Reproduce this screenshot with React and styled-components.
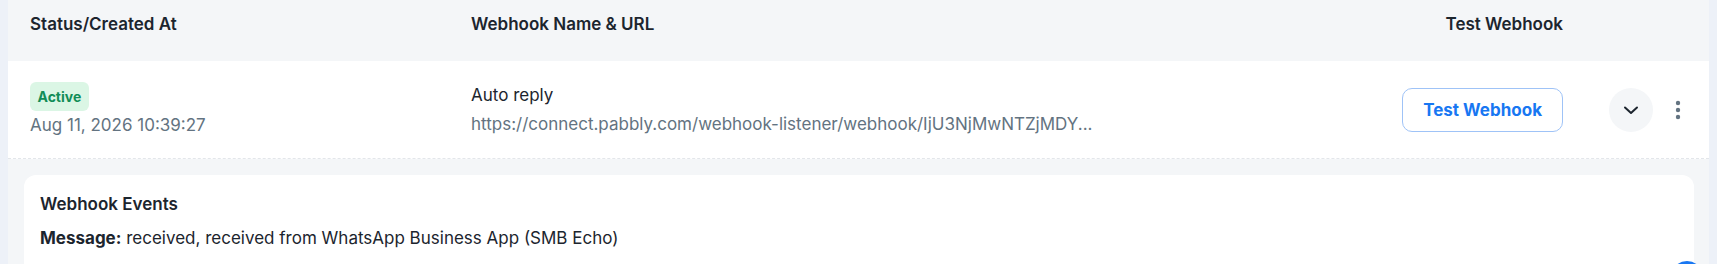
import React from 'react';
import styled, { createGlobalStyle } from 'styled-components';

const GlobalStyle = createGlobalStyle`
  html, body {
    margin: 0;
    padding: 0;
    background: #edf1f8;
    font-family: 'Inter', 'Liberation Sans', sans-serif;
    overflow: hidden;
  }
`;

const Page = styled.div`
  position: relative;
  height: 264px;
  padding: 0 8px;
  background: #edf1f8;
  overflow: hidden;
`;

const Table = styled.div`
  background: #ffffff;
  height: 100%;
`;

const Row = styled.div`
  display: grid;
  grid-template-columns: 395px 1fr 162px 74px;
  column-gap: 46px;
  align-items: ${(p) => (p.$head ? 'start' : 'center')};
  padding: ${(p) => (p.$head ? '12px 26px 0 22px' : '0 26px 0 22px')};
  height: ${(p) => (p.$head ? '61px' : '98px')};
  box-sizing: border-box;
  background: ${(p) => (p.$head ? '#f4f6f8' : '#ffffff')};
  border-bottom: ${(p) => (p.$head ? 'none' : '1px dashed #e3e6ea')};
`;

const HeadCell = styled.div`
  font-size: 17px;
  font-weight: 600;
  color: #1c252e;
  line-height: 24px;
  white-space: nowrap;
  text-align: ${(p) => (p.$right ? 'right' : 'left')};
`;

const Cell = styled.div`
  display: flex;
  flex-direction: column;
  align-items: flex-start;
  gap: ${(p) => p.$gap || '4px'};
  min-width: 0;
`;

const Badge = styled.span`
  display: inline-flex;
  align-items: center;
  height: 29px;
  padding: 0 7.5px;
  border-radius: 6px;
  background: #dbf6e5;
  color: #118d57;
  font-size: 14px;
  font-weight: 700;
`;

const SubText = styled.span`
  font-size: 17px;
  color: #637381;
  line-height: 24px;
  white-space: nowrap;
`;

const Name = styled.span`
  font-size: 17px;
  color: #1c252e;
  line-height: 24px;
`;

const OutlineButton = styled.button`
  justify-self: end;
  height: 44px;
  padding: 0 20px;
  border: 1px solid #9fc3f7;
  border-radius: 10px;
  background: #ffffff;
  color: #1877f2;
  font-family: inherit;
  font-size: 17px;
  font-weight: 700;
  white-space: nowrap;
  cursor: pointer;
`;

const Actions = styled.div`
  display: flex;
  align-items: center;
  gap: 20px;
`;

const RoundButton = styled.button`
  width: 44px;
  height: 44px;
  border-radius: 50%;
  border: none;
  background: #f4f6f8;
  display: flex;
  align-items: center;
  justify-content: center;
  padding: 0;
`;

const IconButton = styled.button`
  width: 10px;
  height: 30px;
  border: none;
  background: transparent;
  display: flex;
  align-items: center;
  justify-content: center;
  padding: 0;
`;

const Expand = styled.div`
  background: #f4f6f8;
  padding: 16px 15px 0 16px;
  height: 100%;
`;

const Card = styled.div`
  background: #ffffff;
  border-radius: 12px;
  padding: 17px 16px;
  height: 200px;
`;

const CardTitle = styled.div`
  font-size: 17px;
  font-weight: 600;
  color: #1c252e;
  line-height: 24px;
  margin-bottom: 10px;
`;

const EventLine = styled.div`
  font-size: 17px;
  color: #1c252e;
  line-height: 24px;

  b {
    font-weight: 700;
  }
`;

const Fab = styled.div`
  position: absolute;
  left: 1671px;
  top: 261px;
  width: 32px;
  height: 32px;
  border-radius: 50%;
  background: #1877f2;
`;

const Chevron = () => (
  <svg width="16" height="10" viewBox="0 0 16 10" fill="none" stroke="#1c252e" strokeWidth="2" strokeLinecap="round" strokeLinejoin="round">
    <path d="M2 2.5l6 5.5 6-5.5" />
  </svg>
);

const Dots = () => (
  <svg width="6" height="20" viewBox="0 0 6 20">
    <circle cx="3" cy="3" r="2.2" fill="#637381" />
    <circle cx="3" cy="10" r="2.2" fill="#637381" />
    <circle cx="3" cy="17" r="2.2" fill="#637381" />
  </svg>
);

const webhook = {
  status: 'Active',
  createdAt: 'Aug 11, 2026 10:39:27',
  name: 'Auto reply',
  url: 'https://connect.pabbly.com/webhook-listener/webhook/IjU3NjMwNTZjMDY...',
  events: 'received, received from WhatsApp Business App (SMB Echo)',
};

export default function App() {
  return (
    <>
      <GlobalStyle />
      <Page>
        <Table>
          <Row $head>
            <HeadCell>Status/Created At</HeadCell>
            <HeadCell>Webhook Name &amp; URL</HeadCell>
            <HeadCell $right>Test Webhook</HeadCell>
            <div />
          </Row>
          <Row>
            <Cell $gap="2px">
              <Badge>{webhook.status}</Badge>
              <SubText>{webhook.createdAt}</SubText>
            </Cell>
            <Cell $gap="5px">
              <Name>{webhook.name}</Name>
              <SubText>{webhook.url}</SubText>
            </Cell>
            <OutlineButton>Test Webhook</OutlineButton>
            <Actions>
              <RoundButton>
                <Chevron />
              </RoundButton>
              <IconButton>
                <Dots />
              </IconButton>
            </Actions>
          </Row>
          <Expand>
            <Card>
              <CardTitle>Webhook Events</CardTitle>
              <EventLine>
                <b>Message:</b> {webhook.events}
              </EventLine>
            </Card>
          </Expand>
        </Table>
        <Fab />
      </Page>
    </>
  );
}
